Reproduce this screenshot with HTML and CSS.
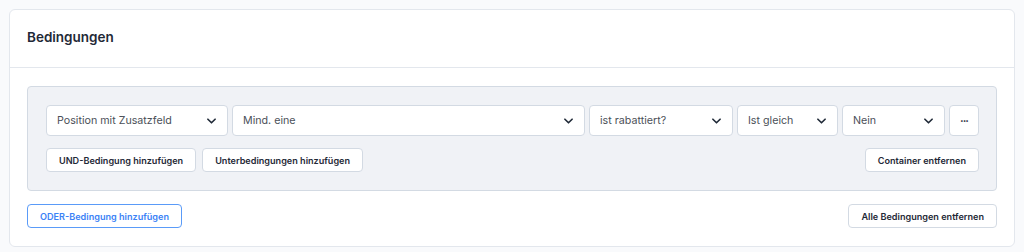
FILE: index.html
```html
<!DOCTYPE html>
<html lang="de">
<head>
  <meta charset="UTF-8">
  <meta name="viewport" content="width=device-width, initial-scale=1.0">
  <title>Bedingungen</title>
  <link rel="stylesheet" href="styles.css">
</head>
<body>

  <!-- Karte Bedingungen -->
  <div class="card">
    <div class="card-header">
      <h2>Bedingungen</h2>
    </div>

    <div class="card-body">
      <div class="container-box">
        <div class="field-row">
          <div class="select w-position">
            <span>Position mit Zusatzfeld</span>
            <svg class="chevron" viewBox="0 0 10 6"><path d="M1 1l4 4 4-4"/></svg>
          </div>
          <div class="select w-grow">
            <span>Mind. eine</span>
            <svg class="chevron" viewBox="0 0 10 6"><path d="M1 1l4 4 4-4"/></svg>
          </div>
          <div class="select w-rabatt">
            <span>ist rabattiert?</span>
            <svg class="chevron" viewBox="0 0 10 6"><path d="M1 1l4 4 4-4"/></svg>
          </div>
          <div class="select w-gleich">
            <span>Ist gleich</span>
            <svg class="chevron" viewBox="0 0 10 6"><path d="M1 1l4 4 4-4"/></svg>
          </div>
          <div class="select w-nein">
            <span>Nein</span>
            <svg class="chevron" viewBox="0 0 10 6"><path d="M1 1l4 4 4-4"/></svg>
          </div>
          <button class="more-btn">&middot;&middot;&middot;</button>
        </div>

        <div class="button-row">
          <button class="btn">UND-Bedingung hinzufügen</button>
          <button class="btn">Unterbedingungen hinzufügen</button>
          <button class="btn push-right">Container entfernen</button>
        </div>
      </div>

      <div class="footer-row">
        <button class="btn btn-primary">ODER-Bedingung hinzufügen</button>
        <button class="btn">Alle Bedingungen entfernen</button>
      </div>
    </div>
  </div>

</body>
</html>
```

FILE: styles.css
```css
body {
  font-family: 'Inter', 'Liberation Sans', sans-serif;
  background: #f9fafc;
  margin: 0;
  padding: 9px 9px 0 9px;
  color: #1f2937;
}

.card {
  background: #fff;
  border: 1px solid #e3e7ed;
  border-radius: 6px;
  width: 1006px;
  box-sizing: border-box;
}

.card-header {
  height: 58px;
  border-bottom: 1px solid #e3e7ed;
  display: flex;
  align-items: center;
  padding: 0 17px;
  box-sizing: border-box;
}

.card-header h2 {
  margin: 0;
  font-size: 13.5px;
  font-weight: 600;
  color: #1f2937;
  margin-top: -3px;
}

.card-body {
  padding: 18px 17px 18px 17px;
}

.container-box {
  background: #f0f2f6;
  border: 1px solid #d3dae3;
  border-radius: 4px;
  padding: 18px 17px 18px 18px;
}

.field-row {
  display: flex;
  gap: 4px;
}

.select {
  height: 31px;
  box-sizing: border-box;
  background: #fff;
  border: 1px solid #d3dae3;
  border-radius: 4px;
  display: flex;
  align-items: center;
  justify-content: space-between;
  padding: 0 11px 0 10px;
  font-size: 10.7px;
  color: #4b5058;
}

.w-position { width: 182px; }
.w-grow { flex: 1; }
.w-rabatt { width: 144px; }
.w-gleich { width: 101px; }
.w-nein { width: 103px; }

.chevron {
  width: 9px;
  height: 6px;
  fill: none;
  stroke: #1f2937;
  stroke-width: 1.8;
  stroke-linecap: round;
  stroke-linejoin: round;
}

.more-btn {
  width: 30px;
  height: 31px;
  background: #fff;
  border: 1px solid #d3dae3;
  border-radius: 4px;
  font-family: inherit;
  font-size: 11px;
  font-weight: 700;
  color: #1f2937;
  padding: 0;
  letter-spacing: -1px;
  cursor: pointer;
}

.button-row {
  display: flex;
  gap: 6px;
  margin-top: 12px;
}

.push-right {
  margin-left: auto;
}

.btn {
  height: 24px;
  padding: 0 12px;
  background: #fff;
  border: 1px solid #d3dae3;
  border-radius: 4px;
  font-family: inherit;
  font-size: 9.1px;
  font-weight: 600;
  color: #1f2937;
  cursor: pointer;
}

.btn-primary {
  border-color: #5a9bf8;
  color: #3b82f6;
  padding: 0 12px;
}

.footer-row {
  display: flex;
  justify-content: space-between;
  margin-top: 13px;
}
```
